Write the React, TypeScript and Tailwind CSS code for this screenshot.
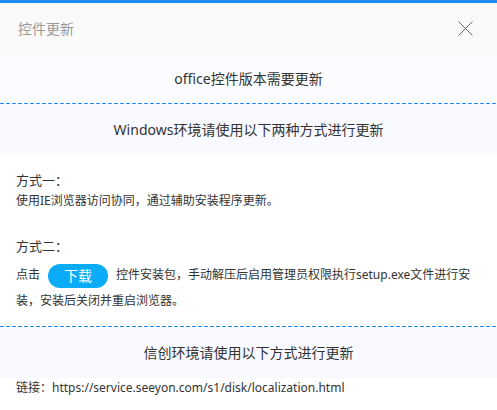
const font = "font-['Noto_Sans','Noto_Sans_CJK_SC',sans-serif]";

function Dashed() {
  return (
    <div className="h-px w-full bg-[repeating-linear-gradient(to_right,#1d8ff2_0_4px,transparent_4px_6px)]" />
  );
}

export default function App() {
  return (
    <div className={`w-[497px] h-[410px] bg-white text-[#333] overflow-hidden ${font}`}>
      <div className="h-[3px] bg-[#1e8cf0]" />
      <div className="h-[50px] bg-[#fafafa] flex items-center justify-between pl-[18px] pr-[24px]">
        <span className="text-[14px] text-[#999]">控件更新</span>
        <svg width="15" height="15" viewBox="0 0 15 15" className="text-[#666]">
          <path d="M0.5 0.5 L14.5 14.5 M14.5 0.5 L0.5 14.5" stroke="currentColor" strokeWidth="1" fill="none" />
        </svg>
      </div>
      <div className="h-[50px] bg-[#fbfcff] flex items-center justify-center text-[14px]">
        office控件版本需要更新
      </div>
      <Dashed />
      <div className="h-[51px] bg-[#f8faff] flex items-center justify-center text-[14px]">
        Windows环境请使用以下两种方式进行更新
      </div>
      <div className="px-4 pt-[15px] pb-[13px]">
        <div className="text-[13px] leading-[20px]">方式一：</div>
        <div className="text-[12px] leading-[20px] mt-px">使用IE浏览器访问协同，通过辅助安装程序更新。</div>
        <div className="text-[13px] leading-[20px] mt-[25px]">方式二：</div>
        <div className="text-[12px] leading-[25px] mt-[6px]">
          点击
          <span className="inline-flex align-middle items-center justify-center w-[60px] h-[24px] mx-2 rounded-full bg-[#0aabf7] text-white text-[14px] leading-none">
            下载
          </span>
          控件安装包，手动解压后启用管理员权限执行setup.exe文件进行安
          <br />
          装，安装后关闭并重启浏览器。
        </div>
      </div>
      <Dashed />
      <div className="h-[51px] bg-[#f8faff] flex items-center justify-center text-[14px]">
        信创环境请使用以下方式进行更新
      </div>
      <div className="px-4 text-[12px] leading-[20px]">
        链接：https://service.seeyon.com/s1/disk/localization.html
      </div>
    </div>
  );
}
